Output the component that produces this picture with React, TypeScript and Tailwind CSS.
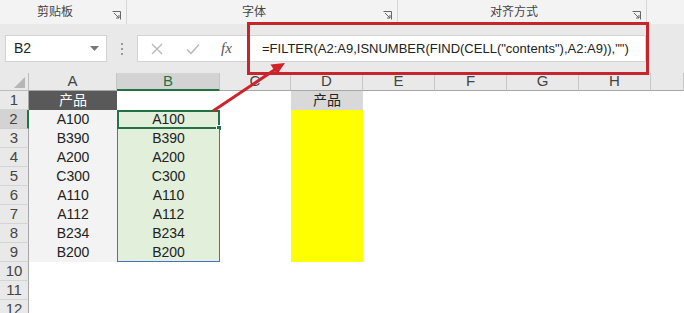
import React from "react";

const COLS = ["A", "B", "C", "D", "E", "F", "G", "H", ""];
const LIST = ["A100", "B390", "A200", "C300", "A110", "A112", "B234", "B200"];
const ROWS = [1, 2, 3, 4, 5, 6, 7, 8, 9, 10, 11, 12];

function Launcher() {
  return (
    <svg width="9" height="9" viewBox="0 0 9 9" className="absolute right-[5px] top-[11px]">
      <path d="M0.5 0.5H8.5V8.5" fill="none" stroke="#666" strokeWidth="1" />
      <path d="M2 2L7 7M7 4V7H4" fill="none" stroke="#666" strokeWidth="1" />
    </svg>
  );
}

function RibbonGroup({ label, width }: { label: string; width: string }) {
  return (
    <div className={`relative flex h-full items-center justify-center border-r border-[#d6d6d6] pr-4 ${width}`}>
      <span className="text-[12px] text-[#444]">{label}</span>
      <Launcher />
    </div>
  );
}

function Cell({ col, row }: { col: number; row: number }) {
  // col 0 = A ... 8 = beyond H
  if (col === 0) {
    if (row === 1)
      return <div className="flex items-center justify-center bg-[#595959] text-white">产品</div>;
    if (row <= 9)
      return <div className="flex items-center justify-center bg-[#f3f3f3] text-[#222]">{LIST[row - 2]}</div>;
  }
  if (col === 1 && row >= 2 && row <= 9) {
    const active = row === 2;
    return (
      <div
        className={`relative flex items-center justify-center bg-[#e2efda] text-[#222] ${
          active
            ? "border-2 border-[#217346]"
            : `border-x border-[#4472c4] ${row === 9 ? "border-b" : ""}`
        }`}
      >
        {LIST[row - 2]}
        {active && <span className="absolute -right-[4px] -bottom-[4px] h-[6px] w-[6px] border border-white bg-[#217346]" />}
      </div>
    );
  }
  if (col === 3) {
    if (row === 1)
      return <div className="flex items-center justify-center bg-[#d9d9d9] text-[#222]">产品</div>;
    if (row <= 9) return <div className="bg-[#ffff00]" />;
  }
  return <div className="bg-white" />;
}

export default function App() {
  return (
    <div
      className="relative h-[313px] w-[684px] overflow-hidden bg-white"
      style={{ fontFamily: '"Liberation Sans", "Noto Sans CJK SC", sans-serif' }}
    >
      {/* ribbon group labels */}
      <div className="flex h-[24px] bg-[#f3f3f3]">
        <RibbonGroup label="剪贴板" width="w-[127px]" />
        <RibbonGroup label="字体" width="w-[271px]" />
        <RibbonGroup label="对齐方式" width="w-[249px]" />
        <div className="flex-1" />
      </div>

      {/* formula bar */}
      <div className="flex h-[49px] items-start bg-[#e9e9e9] px-[5px] pt-[11px]">
        <div className="flex h-[27px] w-[102px] items-center justify-between border border-[#d4d4d4] bg-white pl-[8px] pr-[7px]">
          <span className="text-[14px] text-[#222]">B2</span>
          <svg width="9" height="5" viewBox="0 0 9 5">
            <path d="M0 0H9L4.5 5Z" fill="#777" />
          </svg>
        </div>
        <div className="flex h-[27px] w-[30px] flex-col items-center justify-center gap-[3px]">
          <span className="h-[2px] w-[2px] bg-[#9a9a9a]" />
          <span className="h-[2px] w-[2px] bg-[#9a9a9a]" />
          <span className="h-[2px] w-[2px] bg-[#9a9a9a]" />
        </div>
        <div className="flex h-[27px] w-[509px] items-center border border-[#d4d4d4] bg-white">
          <div className="flex w-[124px] items-center">
            <svg width="12" height="12" viewBox="0 0 12 12" className="ml-[13px]">
              <path d="M1 1L11 11M11 1L1 11" stroke="#b9b9b9" strokeWidth="1.4" />
            </svg>
            <svg width="14" height="12" viewBox="0 0 14 12" className="ml-[23px]">
              <path d="M1 6.5L5 10.5L13 1.5" fill="none" stroke="#b9b9b9" strokeWidth="1.5" />
            </svg>
            <span
              className="ml-[21px] text-[15px] italic text-[#555]"
              style={{ fontFamily: '"Liberation Serif", serif' }}
            >
              fx
            </span>
          </div>
          <span className="text-[13px] text-[#222]">=FILTER(A2:A9,ISNUMBER(FIND(CELL("contents"),A2:A9)),"")</span>
        </div>
      </div>

      {/* sheet grid */}
      <div className="grid grid-cols-[29px_88px_103px_71px_72px_72px_72px_72px_72px_1fr] grid-rows-[18px_repeat(12,19px)] text-[14px]">
        <div className="relative border-r border-b border-[#bdbdbd] bg-[#e9e9e9]">
          <svg width="11" height="11" viewBox="0 0 11 11" className="absolute right-[3px] bottom-[2px]">
            <path d="M11 0V11H0Z" fill="#b6b6b6" />
          </svg>
        </div>
        {COLS.map((c, i) => (
          <div
            key={"h" + i}
            className={`flex items-center justify-center text-[15px] ${
              c === "B"
                ? "border-b-2 border-r border-b-[#217346] border-r-[#c6c6c6] bg-[#d3d3d3] text-[#217346]"
                : "border-r border-b border-r-[#c6c6c6] border-b-[#a6a6a6] bg-[#e9e9e9] text-[#444]"
            }`}
          >
            {c}
          </div>
        ))}
        {ROWS.map((r) => (
          <React.Fragment key={r}>
            <div
              className={`flex items-center justify-center border-b border-r text-[15px] text-[#444] ${
                r === 2 ? "border-b-[#cfcfcf] border-r-2 border-r-[#217346] bg-[#d3d3d3]" : "border-b-[#d4d4d4] border-r-[#a6a6a6] bg-[#e9e9e9]"
              }`}
            >
              {r}
            </div>
            {COLS.map((_, ci) => (
              <Cell key={ci} col={ci} row={r} />
            ))}
          </React.Fragment>
        ))}
      </div>

      {/* annotation: red frame around the formula and arrow from B2 */}
      <div className="pointer-events-none absolute left-[247px] top-[22px] h-[53px] w-[402px] border-[3px] border-[#c8242b]" />
      <svg className="pointer-events-none absolute left-0 top-0" width="684" height="313" viewBox="0 0 684 313">
        <line x1="213" y1="111" x2="275" y2="69.6" stroke="#d1222a" strokeWidth="3" />
        <polygon points="285,63 277,74.5 270.5,64.5" fill="#d1222a" />
      </svg>
    </div>
  );
}
